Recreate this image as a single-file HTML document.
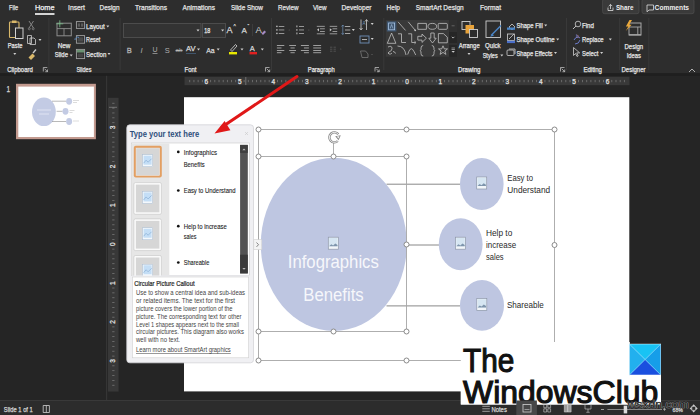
<!DOCTYPE html><html><head><meta charset="utf-8"><style>
html,body{margin:0;padding:0;width:700px;height:415px;overflow:hidden;background:#252525}
svg{display:block;font-family:"Liberation Sans",sans-serif}
</style></head><body>
<svg width="700" height="415" viewBox="0 0 700 415">
<rect x="0" y="0" width="700" height="73.3" fill="#2d2d2d"/>
<rect x="0" y="73.3" width="700" height="327" fill="#252525"/>
<rect x="0" y="73.3" width="700" height="2.5" fill="#1f1f1f"/>
<rect x="0" y="400" width="700" height="15" fill="#2c2c2c"/><rect x="0" y="400" width="700" height="0.9" fill="#3b3b3b"/>
<text x="9" y="10.2" font-size="7.5" fill="#e4e4e4" font-weight="normal" text-anchor="start" textLength="9" lengthAdjust="spacingAndGlyphs" stroke="#e4e4e4" stroke-width="0.25" >File</text>
<text x="35" y="10.2" font-size="7.5" fill="#f4f4f4" font-weight="normal" text-anchor="start" textLength="19.5" lengthAdjust="spacingAndGlyphs" stroke="#f4f4f4" stroke-width="0.25" >Home</text>
<text x="68" y="10.2" font-size="7.5" fill="#e4e4e4" font-weight="normal" text-anchor="start" textLength="17" lengthAdjust="spacingAndGlyphs" stroke="#e4e4e4" stroke-width="0.25" >Insert</text>
<text x="99.5" y="10.2" font-size="7.5" fill="#e4e4e4" font-weight="normal" text-anchor="start" textLength="20" lengthAdjust="spacingAndGlyphs" stroke="#e4e4e4" stroke-width="0.25" >Design</text>
<text x="135" y="10.2" font-size="7.5" fill="#e4e4e4" font-weight="normal" text-anchor="start" textLength="32" lengthAdjust="spacingAndGlyphs" stroke="#e4e4e4" stroke-width="0.25" >Transitions</text>
<text x="182.5" y="10.2" font-size="7.5" fill="#e4e4e4" font-weight="normal" text-anchor="start" textLength="32.5" lengthAdjust="spacingAndGlyphs" stroke="#e4e4e4" stroke-width="0.25" >Animations</text>
<text x="231" y="10.2" font-size="7.5" fill="#e4e4e4" font-weight="normal" text-anchor="start" textLength="32" lengthAdjust="spacingAndGlyphs" stroke="#e4e4e4" stroke-width="0.25" >Slide Show</text>
<text x="278" y="10.2" font-size="7.5" fill="#e4e4e4" font-weight="normal" text-anchor="start" textLength="20.5" lengthAdjust="spacingAndGlyphs" stroke="#e4e4e4" stroke-width="0.25" >Review</text>
<text x="313" y="10.2" font-size="7.5" fill="#e4e4e4" font-weight="normal" text-anchor="start" textLength="13.5" lengthAdjust="spacingAndGlyphs" stroke="#e4e4e4" stroke-width="0.25" >View</text>
<text x="341.5" y="10.2" font-size="7.5" fill="#e4e4e4" font-weight="normal" text-anchor="start" textLength="30" lengthAdjust="spacingAndGlyphs" stroke="#e4e4e4" stroke-width="0.25" >Developer</text>
<text x="386.5" y="10.2" font-size="7.5" fill="#e4e4e4" font-weight="normal" text-anchor="start" textLength="13.5" lengthAdjust="spacingAndGlyphs" stroke="#e4e4e4" stroke-width="0.25" >Help</text>
<text x="415.7" y="10.2" font-size="7.5" fill="#e4e4e4" font-weight="normal" text-anchor="start" textLength="48" lengthAdjust="spacingAndGlyphs" stroke="#e4e4e4" stroke-width="0.25" >SmartArt Design</text>
<text x="480" y="10.2" font-size="7.5" fill="#e4e4e4" font-weight="normal" text-anchor="start" textLength="21" lengthAdjust="spacingAndGlyphs" stroke="#e4e4e4" stroke-width="0.25" >Format</text>
<rect x="35" y="13.2" width="19.5" height="1.6" fill="#ffffff"/>
<rect x="602.6" y="-1" width="36.4" height="14.7" rx="2" fill="#3a3a3a" stroke="#4c4c4c" stroke-width="0.8"/>
<rect x="642" y="-1" width="52" height="14.7" rx="2" fill="#3a3a3a" stroke="#4c4c4c" stroke-width="0.8"/>
<path d="M608 7.5 v3 h5 v-3 M610.5 9 v-4.5 M608.7 6.2 l1.8 -1.8 l1.8 1.8" fill="none" stroke="#dddddd" stroke-width="0.8"/>
<text x="615.9" y="10.3" font-size="7.5" fill="#eeeeee" font-weight="bold" text-anchor="start" textLength="17.5" lengthAdjust="spacingAndGlyphs" >Share</text>
<path d="M647 5 h6.5 v5 h-4.5 l-2 1.8 z" fill="none" stroke="#ddd" stroke-width="0.8"/>
<text x="654.6" y="10.3" font-size="7.5" fill="#eeeeee" font-weight="bold" text-anchor="start" textLength="34.5" lengthAdjust="spacingAndGlyphs" >Comments</text>
<text x="7.2" y="71.6" font-size="7" fill="#e6e6e6" font-weight="normal" text-anchor="start" textLength="25.6" lengthAdjust="spacingAndGlyphs" stroke="#e6e6e6" stroke-width="0.25" >Clipboard</text>
<text x="76.4" y="71.6" font-size="7" fill="#e6e6e6" font-weight="normal" text-anchor="start" textLength="15" lengthAdjust="spacingAndGlyphs" stroke="#e6e6e6" stroke-width="0.25" >Slides</text>
<text x="184.5" y="71.6" font-size="7" fill="#e6e6e6" font-weight="normal" text-anchor="start" textLength="12" lengthAdjust="spacingAndGlyphs" stroke="#e6e6e6" stroke-width="0.25" >Font</text>
<text x="307.8" y="71.6" font-size="7" fill="#e6e6e6" font-weight="normal" text-anchor="start" textLength="27" lengthAdjust="spacingAndGlyphs" stroke="#e6e6e6" stroke-width="0.25" >Paragraph</text>
<text x="458" y="71.6" font-size="7" fill="#e6e6e6" font-weight="normal" text-anchor="start" textLength="22.5" lengthAdjust="spacingAndGlyphs" stroke="#e6e6e6" stroke-width="0.25" >Drawing</text>
<text x="583.4" y="71.6" font-size="7" fill="#e6e6e6" font-weight="normal" text-anchor="start" textLength="18.6" lengthAdjust="spacingAndGlyphs" stroke="#e6e6e6" stroke-width="0.25" >Editing</text>
<text x="621.5" y="71.6" font-size="7" fill="#e6e6e6" font-weight="normal" text-anchor="start" textLength="24" lengthAdjust="spacingAndGlyphs" stroke="#e6e6e6" stroke-width="0.25" >Designer</text>
<rect x="48.5" y="18" width="0.8" height="52" fill="#3c3c3c"/>
<rect x="119.7" y="18" width="0.8" height="52" fill="#3c3c3c"/>
<rect x="271.2" y="18" width="0.8" height="52" fill="#3c3c3c"/>
<rect x="383.4" y="18" width="0.8" height="52" fill="#3c3c3c"/>
<rect x="566.2" y="18" width="0.8" height="52" fill="#3c3c3c"/>
<rect x="619.3" y="18" width="0.8" height="52" fill="#3c3c3c"/>
<rect x="648.4" y="18" width="0.8" height="52" fill="#3c3c3c"/>
<path d="M43.3 67.5 h4 M43.3 67.5 v4 M44.5 68.7 l3 3 M47.5 69.5 v2.2 h-2.2" stroke="#cfcfcf" stroke-width="0.7" fill="none"/>
<path d="M265.5 67.5 h4 M265.5 67.5 v4 M266.7 68.7 l3 3 M269.7 69.5 v2.2 h-2.2" stroke="#cfcfcf" stroke-width="0.7" fill="none"/>
<path d="M375 67.5 h4 M375 67.5 v4 M376.2 68.7 l3 3 M379.2 69.5 v2.2 h-2.2" stroke="#cfcfcf" stroke-width="0.7" fill="none"/>
<path d="M560.5 67.5 h4 M560.5 67.5 v4 M561.7 68.7 l3 3 M564.7 69.5 v2.2 h-2.2" stroke="#cfcfcf" stroke-width="0.7" fill="none"/>
<path d="M689 72 l3 -3 l3 3" stroke="#cfcfcf" stroke-width="0.8" fill="none"/>
<rect x="9.5" y="22" width="9.5" height="15.5" rx="0.8" fill="none" stroke="#d9b86a" stroke-width="1.1"/>
<rect x="12" y="20.5" width="4.5" height="2.5" fill="#d9b86a"/>
<rect x="15.5" y="28" width="7.5" height="10.5" fill="#2b2b2b" stroke="#d0d0d0" stroke-width="1"/>
<text x="7.8" y="47.6" font-size="7" fill="#e6e6e6" font-weight="normal" text-anchor="start" textLength="14.6" lengthAdjust="spacingAndGlyphs" stroke="#e6e6e6" stroke-width="0.25" >Paste</text>
<path d="M13.3 53.1 h3 l-1.5 1.8 z" fill="#d0d0d0"/>
<path d="M29 21 l4.5 7 M33.5 21 l-4.5 7" stroke="#8a8a8a" stroke-width="0.9" fill="none"/><circle cx="29.3" cy="28.8" r="1" fill="none" stroke="#8a8a8a" stroke-width="0.7"/><circle cx="33.2" cy="28.8" r="1" fill="none" stroke="#8a8a8a" stroke-width="0.7"/>
<path d="M27.5 35.5 h4 v8 h-4 z M30 38 h4 l1.5 1.5 v5 h-5.5 z" stroke="#cfcfcf" stroke-width="0.8" fill="#2b2b2b"/>
<path d="M38.5 39.1 h3 l-1.5 1.8 z" fill="#d0d0d0"/>
<path d="M28.5 57.5 l4 -4 l2.5 2.5 l-4 4 z" fill="#d9b86a"/><path d="M33 53 l3 -3.5" stroke="#d0d0d0" stroke-width="1.3"/>
<rect x="57" y="23.2" width="14.3" height="12.6" fill="none" stroke="#8e8e8e" stroke-width="1"/><path d="M57 28.6 h14.3 M64 28.6 v7.2" stroke="#8e8e8e" stroke-width="0.9"/>
<path d="M59.8 20.3 v7 M56.3 23.8 h7" stroke="#7cc08c" stroke-width="0.8"/>
<text x="57.7" y="47.6" font-size="7" fill="#e6e6e6" font-weight="normal" text-anchor="start" textLength="12.7" lengthAdjust="spacingAndGlyphs" stroke="#e6e6e6" stroke-width="0.25" >New</text>
<text x="54.7" y="57.4" font-size="7" fill="#e6e6e6" font-weight="normal" text-anchor="start" textLength="13.3" lengthAdjust="spacingAndGlyphs" stroke="#e6e6e6" stroke-width="0.25" >Slide</text>
<path d="M69.7 54.6 h3 l-1.5 1.8 z" fill="#d0d0d0"/>
<rect x="76.4" y="21.6" width="8.2" height="6.8" fill="none" stroke="#a0a0a0" stroke-width="0.9"/><rect x="77.8" y="23.4" width="2.2" height="3.3" fill="#5a5a5a"/><rect x="81" y="23.4" width="2.2" height="3.3" fill="#5a5a5a"/>
<text x="86" y="29.1" font-size="7" fill="#e6e6e6" font-weight="normal" text-anchor="start" textLength="18.8" lengthAdjust="spacingAndGlyphs" stroke="#e6e6e6" stroke-width="0.25" >Layout</text>
<path d="M106.3 25.6 h3 l-1.5 1.8 z" fill="#d0d0d0"/>
<rect x="76.4" y="35.6" width="8.2" height="7.6" fill="none" stroke="#a0a0a0" stroke-width="0.9"/><rect x="77.8" y="37.3" width="5.4" height="4.3" fill="#4a4a4a"/><path d="M75 40 a2.6 2.6 0 0 1 4 -2.5" stroke="#5a86b8" stroke-width="1" fill="none"/>
<text x="86" y="41.9" font-size="7" fill="#e6e6e6" font-weight="normal" text-anchor="start" textLength="14.3" lengthAdjust="spacingAndGlyphs" stroke="#e6e6e6" stroke-width="0.25" >Reset</text>
<rect x="76.4" y="49.4" width="8.2" height="9.2" fill="none" stroke="#a0a0a0" stroke-width="0.9"/><rect x="76.9" y="49.9" width="7.2" height="2.6" fill="#6a9272"/><rect x="77.8" y="53.5" width="5.4" height="3.8" fill="#444"/>
<text x="86" y="56.6" font-size="7" fill="#e6e6e6" font-weight="normal" text-anchor="start" textLength="20.3" lengthAdjust="spacingAndGlyphs" stroke="#e6e6e6" stroke-width="0.25" >Section</text>
<path d="M107.5 53.1 h3 l-1.5 1.8 z" fill="#d0d0d0"/>
<rect x="123.5" y="23.5" width="77.5" height="14" fill="#333333" stroke="#505050" stroke-width="0.9"/>
<path d="M196.5 29.6 h3 l-1.5 1.8 z" fill="#d0d0d0"/>
<rect x="202.5" y="23.5" width="23" height="14" fill="#333333" stroke="#505050" stroke-width="0.9"/>
<text x="204.3" y="32.8" font-size="7.5" fill="#e8e8e8" font-weight="normal" text-anchor="start" textLength="6" lengthAdjust="spacingAndGlyphs" stroke="#e8e8e8" stroke-width="0.25" >18</text>
<path d="M221.1 29.6 h3 l-1.5 1.8 z" fill="#d0d0d0"/>
<text x="226.5" y="33.1" font-size="9" fill="#d8d8d8" font-weight="normal" text-anchor="start" stroke="#d8d8d8" stroke-width="0.25" >A</text>
<text x="233.5" y="28.1" font-size="5" fill="#d8d8d8" font-weight="normal" text-anchor="start" stroke="#d8d8d8" stroke-width="0.25" >^</text>
<text x="241.5" y="33.1" font-size="8" fill="#d8d8d8" font-weight="normal" text-anchor="start" stroke="#d8d8d8" stroke-width="0.25" >A</text>
<text x="247.5" y="28.1" font-size="5" fill="#d8d8d8" font-weight="normal" text-anchor="start" stroke="#d8d8d8" stroke-width="0.25" >ˇ</text>
<rect x="252" y="24" width="0.7" height="12" fill="#444"/>
<text x="255.5" y="33.1" font-size="9.5" fill="#d0d0d0" font-weight="normal" text-anchor="start" >A</text>
<path d="M261.5 33.5 l3 -3 l1.5 1.5 l-3 3 z" fill="#a58bc4"/>
<text x="126.8" y="52.6" font-size="7.5" fill="#b0b0b0" font-weight="normal" text-anchor="start" stroke="#b0b0b0" stroke-width="0.3" >B</text>
<text x="140.5" y="52.6" font-size="7.5" fill="#b0b0b0" font-weight="normal" text-anchor="start" font-style="italic">I</text>
<text x="152.5" y="51.6" font-size="7" fill="#b0b0b0" font-weight="normal" text-anchor="start" >U</text>
<rect x="152.5" y="53" width="5" height="0.7" fill="#b0b0b0"/>
<text x="164.8" y="52.6" font-size="7.5" fill="#b0b0b0" font-weight="normal" text-anchor="start" >S</text>
<text x="175.5" y="52.1" font-size="6" fill="#a0a0a0" font-weight="normal" text-anchor="start" textLength="7" lengthAdjust="spacingAndGlyphs" >ab</text>
<rect x="175.5" y="50" width="7" height="0.7" fill="#d8d8d8"/>
<text x="186" y="51.1" font-size="7" fill="#d8d8d8" font-weight="normal" text-anchor="start" textLength="9.5" lengthAdjust="spacingAndGlyphs" stroke="#d8d8d8" stroke-width="0.25" >AV</text>
<path d="M186.5 53.5 h9" stroke="#5a86b8" stroke-width="0.9" stroke-dasharray="1 1"/>
<path d="M197.0 48.6 h3 l-1.5 1.8 z" fill="#d0d0d0"/>
<text x="206.2" y="52.6" font-size="7.5" fill="#d8d8d8" font-weight="normal" text-anchor="start" textLength="8.5" lengthAdjust="spacingAndGlyphs" stroke="#d8d8d8" stroke-width="0.25" >Aa</text>
<path d="M216.7 48.6 h3 l-1.5 1.8 z" fill="#d0d0d0"/>
<path d="M230.5 50 l5 -5.5 l1.5 1.5 l-5 5.5 z" fill="none" stroke="#d8d8d8" stroke-width="0.8"/>
<rect x="229" y="52" width="8" height="2.4" fill="#e8e800"/>
<path d="M240.5 48.6 h3 l-1.5 1.8 z" fill="#d0d0d0"/>
<text x="249.8" y="50.6" font-size="7.5" fill="#d8d8d8" font-weight="normal" text-anchor="start" stroke="#d8d8d8" stroke-width="0.25" >A</text>
<rect x="249.5" y="52" width="7.5" height="2.4" fill="#e02020"/>
<path d="M260.8 48.6 h3 l-1.5 1.8 z" fill="#d0d0d0"/>
<rect x="276.2" y="25.7" width="1.4" height="1.4" fill="#c4c4c4"/>
<rect x="278.8" y="26.1" width="5.5" height="0.7" fill="#c4c4c4"/>
<rect x="276.2" y="29.2" width="1.4" height="1.4" fill="#c4c4c4"/>
<rect x="278.8" y="29.6" width="5.5" height="0.7" fill="#c4c4c4"/>
<rect x="276.2" y="32.7" width="1.4" height="1.4" fill="#c4c4c4"/>
<rect x="278.8" y="33.1" width="5.5" height="0.7" fill="#c4c4c4"/>
<circle cx="289.2" cy="30" r="0.5" fill="#666"/>
<rect x="296.4" y="25.5" width="1" height="1.8" fill="#c4c4c4"/>
<rect x="299" y="26.1" width="5" height="0.7" fill="#c4c4c4"/>
<rect x="296.4" y="29.0" width="1" height="1.8" fill="#c4c4c4"/>
<rect x="299" y="29.6" width="5" height="0.7" fill="#c4c4c4"/>
<rect x="296.4" y="32.5" width="1" height="1.8" fill="#c4c4c4"/>
<rect x="299" y="33.1" width="5" height="0.7" fill="#c4c4c4"/>
<circle cx="308.9" cy="30" r="0.5" fill="#666"/>
<rect x="316.8" y="25.9" width="8" height="0.7" fill="#c4c4c4"/><rect x="320" y="28.5" width="4.8" height="0.7" fill="#c4c4c4"/><rect x="320" y="31" width="4.8" height="0.7" fill="#c4c4c4"/><rect x="316.8" y="33.5" width="8" height="0.7" fill="#c4c4c4"/>
<path d="M319 28.2 l-2 1.6 l2 1.6 z" fill="#c4c4c4"/>
<rect x="329.7" y="25.9" width="7.5" height="0.7" fill="#c4c4c4"/><rect x="332.5" y="28.5" width="4.7" height="0.7" fill="#c4c4c4"/><rect x="332.5" y="31" width="4.7" height="0.7" fill="#c4c4c4"/><rect x="329.7" y="33.5" width="7.5" height="0.7" fill="#c4c4c4"/>
<path d="M329.8 28.2 l2 1.6 l-2 1.6 z" fill="#c4c4c4"/>
<path d="M342.8 25 v9.5 M341.5 26.5 l1.3 -1.5 l1.3 1.5 M341.5 33 l1.3 1.5 l1.3 -1.5" stroke="#6f90b8" stroke-width="0.7" fill="none"/>
<rect x="345" y="26.0" width="5.3" height="0.8" fill="#c4c4c4"/>
<rect x="345" y="29.6" width="5.3" height="0.8" fill="#c4c4c4"/>
<rect x="345" y="33.2" width="5.3" height="0.8" fill="#c4c4c4"/>
<path d="M351.8 29.1 h3 l-1.5 1.8 z" fill="#d0d0d0"/>
<rect x="276.90" y="45.2" width="7.40" height="0.75" fill="#c4c4c4"/>
<rect x="276.90" y="47.6" width="4.59" height="0.75" fill="#c4c4c4"/>
<rect x="276.90" y="50.0" width="7.40" height="0.75" fill="#c4c4c4"/>
<rect x="276.90" y="52.4" width="4.59" height="0.75" fill="#c4c4c4"/>
<rect x="289.20" y="45.2" width="6.80" height="0.75" fill="#c4c4c4"/>
<rect x="290.49" y="47.6" width="4.22" height="0.75" fill="#c4c4c4"/>
<rect x="289.20" y="50.0" width="6.80" height="0.75" fill="#c4c4c4"/>
<rect x="290.49" y="52.4" width="4.22" height="0.75" fill="#c4c4c4"/>
<rect x="300.90" y="45.2" width="8.00" height="0.75" fill="#c4c4c4"/>
<rect x="303.94" y="47.6" width="4.96" height="0.75" fill="#c4c4c4"/>
<rect x="300.90" y="50.0" width="8.00" height="0.75" fill="#c4c4c4"/>
<rect x="303.94" y="52.4" width="4.96" height="0.75" fill="#c4c4c4"/>
<rect x="313.20" y="45.2" width="7.90" height="0.75" fill="#c4c4c4"/>
<rect x="313.20" y="47.6" width="7.90" height="0.75" fill="#c4c4c4"/>
<rect x="313.20" y="50.0" width="7.90" height="0.75" fill="#c4c4c4"/>
<rect x="313.20" y="52.4" width="7.90" height="0.75" fill="#c4c4c4"/>
<path d="M330 47.2 h2.4 M330 49.2 h2.4 M330 51.2 h2.4 M333.5 47.2 h2.4 M333.5 49.2 h2.4 M333.5 51.2 h2.4" stroke="#6a6a6a" stroke-width="0.6"/>
<circle cx="340.8" cy="49" r="0.5" fill="#666"/>
<path d="M361 19.5 v10 M359.5 28 l1.5 2 l1.5 -2 M366.5 30 v-10 M365 21.5 l1.5 -2 l1.5 2" stroke="#cfcfcf" stroke-width="0.8" fill="none"/>
<text x="362.5" y="24.6" font-size="4.5" fill="#6f90b8" font-weight="normal" text-anchor="start" >A</text>
<path d="M370.7 23.1 h3 l-1.5 1.8 z" fill="#d0d0d0"/>
<rect x="360" y="36" width="9" height="7" fill="none" stroke="#6f90b8" stroke-width="0.9"/><path d="M362 39.5 h5" stroke="#cfcfcf" stroke-width="0.8"/>
<path d="M370.7 38.1 h3 l-1.5 1.8 z" fill="#d0d0d0"/>
<path d="M360.5 51 h5 l2.5 3 v3.5 h-6 z" fill="none" stroke="#777" stroke-width="0.8"/>
<circle cx="372" cy="54.5" r="0.5" fill="#777"/>
<rect x="385.7" y="20" width="63.5" height="36.7" fill="#393939"/>
<rect x="449.2" y="20" width="7.8" height="36.7" fill="#303030"/><rect x="449.2" y="32" width="7.8" height="11" fill="#262626"/><rect x="449.2" y="45" width="7.8" height="11.7" fill="#262626"/>
<rect x="386.8" y="21.3" width="9.6" height="10.2" fill="#3f5670"/><rect x="388.6" y="23" width="6" height="6.8" fill="none" stroke="#a8c4e4" stroke-width="0.8"/><path d="M390.2 28.5 l1.4 -4 l1.4 4" stroke="#a8c4e4" stroke-width="0.6" fill="none"/>
<path d="M398 21.8 L405.5 30.4" fill="none" stroke="#c8c8c8" stroke-width="0.75"/>
<path d="M408.2 21.8 L415 30" fill="none" stroke="#c8c8c8" stroke-width="0.75"/>
<circle cx="415.2" cy="30.3" r="0.9" fill="#c8c8c8"/>
<path d="M417.8 23.4 h8.6 v5.9 h-8.6 z" fill="none" stroke="#c8c8c8" stroke-width="0.75"/>
<ellipse cx="432.3" cy="26.35" rx="4.3" ry="2.95" fill="none" stroke="#c8c8c8" stroke-width="0.75"/>
<path d="M439.2 23.4 h7.1 q1 0 1 1 v3.9 q0 1 -1 1 h-7.1 q-1 0 -1 -1 v-3.9 q0 -1 1 -1 z" fill="none" stroke="#c8c8c8" stroke-width="0.75"/>
<path d="M387.3 43.3 L391.6 33 L395.9 43.3 z" fill="none" stroke="#c8c8c8" stroke-width="0.75"/>
<path d="M398 33.8 h3.5 v8.7 h4.5" fill="none" stroke="#c8c8c8" stroke-width="0.75"/>
<path d="M408.2 33.8 h3.5 v8.7 h3.5" fill="none" stroke="#c8c8c8" stroke-width="0.75"/>
<path d="M414.5 41.2 l1.5 1.3 l-1.5 1.3" fill="none" stroke="#c8c8c8" stroke-width="0.75"/>
<path d="M417.8 36.3 h4.2 v-2.3 l4.4 4.2 l-4.4 4.2 v-2.3 h-4.2 z" fill="none" stroke="#c8c8c8" stroke-width="0.75"/>
<path d="M430.8 33 h3.4 v5.2 h2 l-3.7 4.8 l-3.7 -4.8 h2 z" fill="none" stroke="#c8c8c8" stroke-width="0.75"/>
<path d="M438.4 33.6 h5 l3.9 3.6 v5.6 h-8.9 z" fill="none" stroke="#c8c8c8" stroke-width="0.75"/>
<path d="M388 47 q4 -2 4 1.5 q0 2.5 -3 3.5 q-2 1 0 2 q2 0.5 3 -1 M393 51.5 q2 0 2.5 2" fill="none" stroke="#c8c8c8" stroke-width="0.75"/>
<path d="M397.5 46 q7 0 8.5 9" fill="none" stroke="#c8c8c8" stroke-width="0.75"/>
<path d="M407.7 54.5 q2.5 -8 5 -5 q1.5 2 3 5.5" fill="none" stroke="#c8c8c8" stroke-width="0.75"/>
<path d="M423.2 45.5 q-2.2 0 -2.2 2.5 v1.8 l-0.8 1 l0.8 1 v1.8 q0 2.4 2.2 2.4" fill="none" stroke="#c8c8c8" stroke-width="0.75"/>
<path d="M431.8 45.5 q2.2 0 2.2 2.5 v1.8 l0.8 1 l-0.8 1 v1.8 q0 2.4 -2.2 2.4" fill="none" stroke="#c8c8c8" stroke-width="0.75"/>
<path d="M443 45.8 l1.3 3.1 h3.2 l-2.6 2.1 l1 3.4 l-2.9 -2 l-2.9 2 l1 -3.4 l-2.6 -2.1 h3.2 z" fill="none" stroke="#c8c8c8" stroke-width="0.75"/>
<rect x="451.6" y="25.5" width="3" height="0.7" fill="#777"/>
<path d="M451.8 36.8 l1.3 1.3 l1.3 -1.3" stroke="#d0d0d0" stroke-width="0.8" fill="none"/>
<path d="M451.5 48 h3.4 M451.5 49.5 h3.4" stroke="#cfcfcf" stroke-width="0.6"/><path d="M451.5 51 h3.4 l-1.7 1.8 z" fill="#cfcfcf"/>
<rect x="462" y="21.5" width="8" height="8" fill="none" stroke="#cfcfcf" stroke-width="0.9"/>
<rect x="465.5" y="25" width="8.5" height="8.5" fill="#e8a33a"/>
<rect x="469.5" y="29.5" width="8" height="8" fill="#2b2b2b" stroke="#cfcfcf" stroke-width="0.9"/>
<text x="458.7" y="48.1" font-size="7" fill="#e6e6e6" font-weight="normal" text-anchor="start" textLength="21" lengthAdjust="spacingAndGlyphs" stroke="#e6e6e6" stroke-width="0.25" >Arrange</text>
<path d="M467.5 53.1 h3 l-1.5 1.8 z" fill="#d0d0d0"/>
<rect x="486" y="21" width="14.5" height="16.5" fill="none" stroke="#cfcfcf" stroke-width="0.9"/>
<path d="M491 35.5 l10 -10" stroke="#4a86c8" stroke-width="1.4"/><path d="M490 37 l2.5 -3 l1.5 1.5 z" fill="#4a86c8"/>
<text x="485" y="48.1" font-size="7" fill="#e6e6e6" font-weight="normal" text-anchor="start" textLength="15.7" lengthAdjust="spacingAndGlyphs" stroke="#e6e6e6" stroke-width="0.25" >Quick</text>
<text x="482.7" y="57.8" font-size="7" fill="#e6e6e6" font-weight="normal" text-anchor="start" textLength="15" lengthAdjust="spacingAndGlyphs" stroke="#e6e6e6" stroke-width="0.25" >Styles</text>
<path d="M500.3 54.6 h3 l-1.5 1.8 z" fill="#d0d0d0"/>
<path d="M509 27 l3 -3 l3 3 l-3 3 z" fill="none" stroke="#cfcfcf" stroke-width="0.8"/><rect x="507" y="27.5" width="8" height="2.3" fill="#4a86c8"/>
<text x="516.5" y="27.8" font-size="7" fill="#e6e6e6" font-weight="normal" text-anchor="start" textLength="26.2" lengthAdjust="spacingAndGlyphs" stroke="#e6e6e6" stroke-width="0.25" >Shape Fill</text>
<path d="M544.2 24.6 h3 l-1.5 1.8 z" fill="#d0d0d0"/>
<rect x="507.5" y="34" width="7" height="6.5" fill="none" stroke="#cfcfcf" stroke-width="0.8"/><path d="M509 39 l5 -5" stroke="#cfcfcf" stroke-width="0.8"/><rect x="507" y="40.8" width="8" height="2.3" fill="#4a6ec8"/>
<text x="516.5" y="42.1" font-size="7" fill="#e6e6e6" font-weight="normal" text-anchor="start" textLength="38.2" lengthAdjust="spacingAndGlyphs" stroke="#e6e6e6" stroke-width="0.25" >Shape Outline</text>
<path d="M556.2 38.6 h3 l-1.5 1.8 z" fill="#d0d0d0"/>
<rect x="507" y="50" width="7" height="5.5" rx="1" fill="none" stroke="#cfcfcf" stroke-width="0.8"/><path d="M509 49 h6 v5" fill="none" stroke="#cfcfcf" stroke-width="0.8"/>
<text x="516.5" y="55.6" font-size="7" fill="#e6e6e6" font-weight="normal" text-anchor="start" textLength="36" lengthAdjust="spacingAndGlyphs" stroke="#e6e6e6" stroke-width="0.25" >Shape Effects</text>
<path d="M554.0 52.1 h3 l-1.5 1.8 z" fill="#d0d0d0"/>
<circle cx="578" cy="24" r="2.8" fill="none" stroke="#cfcfcf" stroke-width="0.8"/><path d="M576 26 l-3 3" stroke="#cfcfcf" stroke-width="0.9"/>
<text x="582" y="27.8" font-size="7" fill="#e6e6e6" font-weight="normal" text-anchor="start" textLength="11.9" lengthAdjust="spacingAndGlyphs" stroke="#e6e6e6" stroke-width="0.25" >Find</text>
<path d="M574 40 q3 -5 6 -2 M575 44 q4 0 5 -4" stroke="#6a7ac8" stroke-width="1" fill="none"/><text x="576" y="38" font-size="5" fill="#a58bc4">b</text>
<text x="582" y="42.0" font-size="7" fill="#e6e6e6" font-weight="normal" text-anchor="start" textLength="21.6" lengthAdjust="spacingAndGlyphs" stroke="#e6e6e6" stroke-width="0.25" >Replace</text>
<path d="M608.8 38.6 h3 l-1.5 1.8 z" fill="#d0d0d0"/>
<path d="M573.5 47.5 v8 l2 -2 l1.5 3 l1.2 -0.6 l-1.5 -3 h3 z" fill="none" stroke="#cfcfcf" stroke-width="0.8"/>
<text x="582" y="55.6" font-size="7" fill="#e6e6e6" font-weight="normal" text-anchor="start" textLength="16.3" lengthAdjust="spacingAndGlyphs" stroke="#e6e6e6" stroke-width="0.25" >Select</text>
<path d="M600.1 52.1 h3 l-1.5 1.8 z" fill="#d0d0d0"/>
<rect x="629" y="23" width="12" height="12" fill="none" stroke="#a8a8a8" stroke-width="1"/><path d="M629 27 h12 M637.8 27 v8" stroke="#a8a8a8" stroke-width="0.9"/><rect x="629" y="34.2" width="12" height="1.2" fill="#a8a8a8"/>
<path d="M629.5 19.9 l-3.6 6.5 h2.4 l-2.5 4.6 l5.8 -6.2 h-2.4 l2.8 -4.9 z" fill="#eaa83a"/>
<text x="624.5" y="48.6" font-size="7" fill="#e6e6e6" font-weight="normal" text-anchor="start" textLength="18.7" lengthAdjust="spacingAndGlyphs" stroke="#e6e6e6" stroke-width="0.25" >Design</text>
<text x="626.7" y="57.6" font-size="7" fill="#e6e6e6" font-weight="normal" text-anchor="start" textLength="14.3" lengthAdjust="spacingAndGlyphs" stroke="#e6e6e6" stroke-width="0.25" >Ideas</text>
<rect x="106.2" y="75.8" width="0.9" height="324.7" fill="#3a3a3a"/>
<text x="6.5" y="92" font-size="8.5" fill="#d8d8d8" font-weight="normal" text-anchor="start" textLength="3.6" lengthAdjust="spacingAndGlyphs" stroke="#d8d8d8" stroke-width="0.25" >1</text>
<rect x="16" y="83.8" width="79.9" height="55.4" fill="#c39a8f"/>
<rect x="18.3" y="86.6" width="75.6" height="50.4" fill="#ffffff"/>
<ellipse cx="43.9" cy="111.8" rx="11.9" ry="14.3" fill="#c3cbe4"/>
<path d="M52 101.2 h14 M56.6 111.3 h6 M52 121.5 h14" stroke="#8a8a8a" stroke-width="0.6"/>
<ellipse cx="69.1" cy="101.3" rx="3" ry="3.4" fill="#c3cbe4"/><ellipse cx="65.5" cy="111.3" rx="3" ry="3.4" fill="#c3cbe4"/><ellipse cx="69.1" cy="121.5" rx="3" ry="3.4" fill="#c3cbe4"/>
<path d="M73 100.5 h6 M73 102.5 h4 M69.5 110.5 h5 M69.5 112.5 h3 M73 121 h6" stroke="#b8b8b8" stroke-width="0.5"/>
<path d="M37 110 h14 M39 114 h10" stroke="#e6eaf5" stroke-width="0.8"/>
<rect x="184.5" y="76.8" width="445" height="8.4" fill="#393939"/>
<rect x="108" y="97.8" width="10.6" height="293.8" fill="#383838"/>
<rect x="189.36" y="79.9" width="0.8" height="2.3" fill="#767676"/>
<rect x="193.53" y="79.9" width="0.8" height="2.3" fill="#767676"/>
<rect x="197.71" y="79.9" width="0.8" height="2.3" fill="#767676"/>
<rect x="201.89" y="79.9" width="0.8" height="2.3" fill="#767676"/>
<text x="206.42000000000002" y="83.9" font-size="6.5" fill="#e4e4e4" font-weight="normal" text-anchor="middle" stroke="#e4e4e4" stroke-width="0.25" >6</text>
<rect x="210.25" y="79.9" width="0.8" height="2.3" fill="#767676"/>
<rect x="214.43" y="79.9" width="0.8" height="2.3" fill="#767676"/>
<rect x="218.61" y="79.9" width="0.8" height="2.3" fill="#767676"/>
<rect x="222.78" y="79.9" width="0.8" height="2.3" fill="#767676"/>
<rect x="226.96" y="79.9" width="0.8" height="2.3" fill="#767676"/>
<rect x="231.14" y="79.9" width="0.8" height="2.3" fill="#767676"/>
<rect x="235.32" y="79.9" width="0.8" height="2.3" fill="#767676"/>
<text x="239.85" y="83.9" font-size="6.5" fill="#e4e4e4" font-weight="normal" text-anchor="middle" stroke="#e4e4e4" stroke-width="0.25" >5</text>
<rect x="243.68" y="79.9" width="0.8" height="2.3" fill="#767676"/>
<rect x="247.86" y="79.9" width="0.8" height="2.3" fill="#767676"/>
<rect x="252.04" y="79.9" width="0.8" height="2.3" fill="#767676"/>
<rect x="256.21" y="79.9" width="0.8" height="2.3" fill="#767676"/>
<rect x="260.39" y="79.9" width="0.8" height="2.3" fill="#767676"/>
<rect x="264.57" y="79.9" width="0.8" height="2.3" fill="#767676"/>
<rect x="268.75" y="79.9" width="0.8" height="2.3" fill="#767676"/>
<text x="273.28" y="83.9" font-size="6.5" fill="#e4e4e4" font-weight="normal" text-anchor="middle" stroke="#e4e4e4" stroke-width="0.25" >4</text>
<rect x="277.11" y="79.9" width="0.8" height="2.3" fill="#767676"/>
<rect x="281.29" y="79.9" width="0.8" height="2.3" fill="#767676"/>
<rect x="285.47" y="79.9" width="0.8" height="2.3" fill="#767676"/>
<rect x="289.64" y="79.9" width="0.8" height="2.3" fill="#767676"/>
<rect x="293.82" y="79.9" width="0.8" height="2.3" fill="#767676"/>
<rect x="298.00" y="79.9" width="0.8" height="2.3" fill="#767676"/>
<rect x="302.18" y="79.9" width="0.8" height="2.3" fill="#767676"/>
<text x="306.71000000000004" y="83.9" font-size="6.5" fill="#e4e4e4" font-weight="normal" text-anchor="middle" stroke="#e4e4e4" stroke-width="0.25" >3</text>
<rect x="310.54" y="79.9" width="0.8" height="2.3" fill="#767676"/>
<rect x="314.72" y="79.9" width="0.8" height="2.3" fill="#767676"/>
<rect x="318.90" y="79.9" width="0.8" height="2.3" fill="#767676"/>
<rect x="323.07" y="79.9" width="0.8" height="2.3" fill="#767676"/>
<rect x="327.25" y="79.9" width="0.8" height="2.3" fill="#767676"/>
<rect x="331.43" y="79.9" width="0.8" height="2.3" fill="#767676"/>
<rect x="335.61" y="79.9" width="0.8" height="2.3" fill="#767676"/>
<text x="340.14" y="83.9" font-size="6.5" fill="#e4e4e4" font-weight="normal" text-anchor="middle" stroke="#e4e4e4" stroke-width="0.25" >2</text>
<rect x="343.97" y="79.9" width="0.8" height="2.3" fill="#767676"/>
<rect x="348.15" y="79.9" width="0.8" height="2.3" fill="#767676"/>
<rect x="352.33" y="79.9" width="0.8" height="2.3" fill="#767676"/>
<rect x="356.50" y="79.9" width="0.8" height="2.3" fill="#767676"/>
<rect x="360.68" y="79.9" width="0.8" height="2.3" fill="#767676"/>
<rect x="364.86" y="79.9" width="0.8" height="2.3" fill="#767676"/>
<rect x="369.04" y="79.9" width="0.8" height="2.3" fill="#767676"/>
<text x="373.57" y="83.9" font-size="6.5" fill="#e4e4e4" font-weight="normal" text-anchor="middle" stroke="#e4e4e4" stroke-width="0.25" >1</text>
<rect x="377.40" y="79.9" width="0.8" height="2.3" fill="#767676"/>
<rect x="381.58" y="79.9" width="0.8" height="2.3" fill="#767676"/>
<rect x="385.76" y="79.9" width="0.8" height="2.3" fill="#767676"/>
<rect x="389.94" y="79.9" width="0.8" height="2.3" fill="#767676"/>
<rect x="394.11" y="79.9" width="0.8" height="2.3" fill="#767676"/>
<rect x="398.29" y="79.9" width="0.8" height="2.3" fill="#767676"/>
<rect x="402.47" y="79.9" width="0.8" height="2.3" fill="#767676"/>
<text x="407.0" y="83.9" font-size="6.5" fill="#e4e4e4" font-weight="normal" text-anchor="middle" stroke="#e4e4e4" stroke-width="0.25" >0</text>
<rect x="410.83" y="79.9" width="0.8" height="2.3" fill="#767676"/>
<rect x="415.01" y="79.9" width="0.8" height="2.3" fill="#767676"/>
<rect x="419.19" y="79.9" width="0.8" height="2.3" fill="#767676"/>
<rect x="423.36" y="79.9" width="0.8" height="2.3" fill="#767676"/>
<rect x="427.54" y="79.9" width="0.8" height="2.3" fill="#767676"/>
<rect x="431.72" y="79.9" width="0.8" height="2.3" fill="#767676"/>
<rect x="435.90" y="79.9" width="0.8" height="2.3" fill="#767676"/>
<text x="440.43" y="83.9" font-size="6.5" fill="#e4e4e4" font-weight="normal" text-anchor="middle" stroke="#e4e4e4" stroke-width="0.25" >1</text>
<rect x="444.26" y="79.9" width="0.8" height="2.3" fill="#767676"/>
<rect x="448.44" y="79.9" width="0.8" height="2.3" fill="#767676"/>
<rect x="452.62" y="79.9" width="0.8" height="2.3" fill="#767676"/>
<rect x="456.79" y="79.9" width="0.8" height="2.3" fill="#767676"/>
<rect x="460.97" y="79.9" width="0.8" height="2.3" fill="#767676"/>
<rect x="465.15" y="79.9" width="0.8" height="2.3" fill="#767676"/>
<rect x="469.33" y="79.9" width="0.8" height="2.3" fill="#767676"/>
<text x="473.86" y="83.9" font-size="6.5" fill="#e4e4e4" font-weight="normal" text-anchor="middle" stroke="#e4e4e4" stroke-width="0.25" >2</text>
<rect x="477.69" y="79.9" width="0.8" height="2.3" fill="#767676"/>
<rect x="481.87" y="79.9" width="0.8" height="2.3" fill="#767676"/>
<rect x="486.05" y="79.9" width="0.8" height="2.3" fill="#767676"/>
<rect x="490.22" y="79.9" width="0.8" height="2.3" fill="#767676"/>
<rect x="494.40" y="79.9" width="0.8" height="2.3" fill="#767676"/>
<rect x="498.58" y="79.9" width="0.8" height="2.3" fill="#767676"/>
<rect x="502.76" y="79.9" width="0.8" height="2.3" fill="#767676"/>
<text x="507.28999999999996" y="83.9" font-size="6.5" fill="#e4e4e4" font-weight="normal" text-anchor="middle" stroke="#e4e4e4" stroke-width="0.25" >3</text>
<rect x="511.12" y="79.9" width="0.8" height="2.3" fill="#767676"/>
<rect x="515.30" y="79.9" width="0.8" height="2.3" fill="#767676"/>
<rect x="519.48" y="79.9" width="0.8" height="2.3" fill="#767676"/>
<rect x="523.65" y="79.9" width="0.8" height="2.3" fill="#767676"/>
<rect x="527.83" y="79.9" width="0.8" height="2.3" fill="#767676"/>
<rect x="532.01" y="79.9" width="0.8" height="2.3" fill="#767676"/>
<rect x="536.19" y="79.9" width="0.8" height="2.3" fill="#767676"/>
<text x="540.72" y="83.9" font-size="6.5" fill="#e4e4e4" font-weight="normal" text-anchor="middle" stroke="#e4e4e4" stroke-width="0.25" >4</text>
<rect x="544.55" y="79.9" width="0.8" height="2.3" fill="#767676"/>
<rect x="548.73" y="79.9" width="0.8" height="2.3" fill="#767676"/>
<rect x="552.91" y="79.9" width="0.8" height="2.3" fill="#767676"/>
<rect x="557.08" y="79.9" width="0.8" height="2.3" fill="#767676"/>
<rect x="561.26" y="79.9" width="0.8" height="2.3" fill="#767676"/>
<rect x="565.44" y="79.9" width="0.8" height="2.3" fill="#767676"/>
<rect x="569.62" y="79.9" width="0.8" height="2.3" fill="#767676"/>
<text x="574.15" y="83.9" font-size="6.5" fill="#e4e4e4" font-weight="normal" text-anchor="middle" stroke="#e4e4e4" stroke-width="0.25" >5</text>
<rect x="577.98" y="79.9" width="0.8" height="2.3" fill="#767676"/>
<rect x="582.16" y="79.9" width="0.8" height="2.3" fill="#767676"/>
<rect x="586.34" y="79.9" width="0.8" height="2.3" fill="#767676"/>
<rect x="590.51" y="79.9" width="0.8" height="2.3" fill="#767676"/>
<rect x="594.69" y="79.9" width="0.8" height="2.3" fill="#767676"/>
<rect x="598.87" y="79.9" width="0.8" height="2.3" fill="#767676"/>
<rect x="603.05" y="79.9" width="0.8" height="2.3" fill="#767676"/>
<text x="607.5799999999999" y="83.9" font-size="6.5" fill="#e4e4e4" font-weight="normal" text-anchor="middle" stroke="#e4e4e4" stroke-width="0.25" >6</text>
<rect x="611.41" y="79.9" width="0.8" height="2.3" fill="#767676"/>
<rect x="615.59" y="79.9" width="0.8" height="2.3" fill="#767676"/>
<rect x="619.77" y="79.9" width="0.8" height="2.3" fill="#767676"/>
<rect x="623.94" y="79.9" width="0.8" height="2.3" fill="#767676"/>
<path d="M245.8 77.5 v7.3" stroke="#d8d8d8" stroke-width="0.7" stroke-dasharray="1 1"/>
<rect x="112.2" y="102.84" width="2.3" height="0.8" fill="#767676"/>
<rect x="112.2" y="107.70" width="2.3" height="0.8" fill="#767676"/>
<rect x="112.2" y="112.56" width="2.3" height="0.8" fill="#767676"/>
<rect x="112.2" y="117.42" width="2.3" height="0.8" fill="#767676"/>
<rect x="112.2" y="122.29" width="2.3" height="0.8" fill="#767676"/>
<text x="0" y="-0.4" font-size="6.5" fill="#e4e4e4" font-weight="normal" text-anchor="middle" stroke="#e4e4e4" stroke-width="0.25" transform="translate(115.60,127.50) rotate(-90)">3</text>
<rect x="112.2" y="132.01" width="2.3" height="0.8" fill="#767676"/>
<rect x="112.2" y="136.88" width="2.3" height="0.8" fill="#767676"/>
<rect x="112.2" y="141.74" width="2.3" height="0.8" fill="#767676"/>
<rect x="112.2" y="146.60" width="2.3" height="0.8" fill="#767676"/>
<rect x="112.2" y="151.46" width="2.3" height="0.8" fill="#767676"/>
<rect x="112.2" y="156.33" width="2.3" height="0.8" fill="#767676"/>
<rect x="112.2" y="161.19" width="2.3" height="0.8" fill="#767676"/>
<text x="0" y="-0.4" font-size="6.5" fill="#e4e4e4" font-weight="normal" text-anchor="middle" stroke="#e4e4e4" stroke-width="0.25" transform="translate(115.60,166.40) rotate(-90)">2</text>
<rect x="112.2" y="170.91" width="2.3" height="0.8" fill="#767676"/>
<rect x="112.2" y="175.78" width="2.3" height="0.8" fill="#767676"/>
<rect x="112.2" y="180.64" width="2.3" height="0.8" fill="#767676"/>
<rect x="112.2" y="185.50" width="2.3" height="0.8" fill="#767676"/>
<rect x="112.2" y="190.36" width="2.3" height="0.8" fill="#767676"/>
<rect x="112.2" y="195.22" width="2.3" height="0.8" fill="#767676"/>
<rect x="112.2" y="200.09" width="2.3" height="0.8" fill="#767676"/>
<text x="0" y="-0.4" font-size="6.5" fill="#e4e4e4" font-weight="normal" text-anchor="middle" stroke="#e4e4e4" stroke-width="0.25" transform="translate(115.60,205.30) rotate(-90)">1</text>
<rect x="112.2" y="209.81" width="2.3" height="0.8" fill="#767676"/>
<rect x="112.2" y="214.67" width="2.3" height="0.8" fill="#767676"/>
<rect x="112.2" y="219.54" width="2.3" height="0.8" fill="#767676"/>
<rect x="112.2" y="224.40" width="2.3" height="0.8" fill="#767676"/>
<rect x="112.2" y="229.26" width="2.3" height="0.8" fill="#767676"/>
<rect x="112.2" y="234.12" width="2.3" height="0.8" fill="#767676"/>
<rect x="112.2" y="238.99" width="2.3" height="0.8" fill="#767676"/>
<text x="0" y="-0.4" font-size="6.5" fill="#e4e4e4" font-weight="normal" text-anchor="middle" stroke="#e4e4e4" stroke-width="0.25" transform="translate(115.60,244.20) rotate(-90)">0</text>
<rect x="112.2" y="248.71" width="2.3" height="0.8" fill="#767676"/>
<rect x="112.2" y="253.57" width="2.3" height="0.8" fill="#767676"/>
<rect x="112.2" y="258.44" width="2.3" height="0.8" fill="#767676"/>
<rect x="112.2" y="263.30" width="2.3" height="0.8" fill="#767676"/>
<rect x="112.2" y="268.16" width="2.3" height="0.8" fill="#767676"/>
<rect x="112.2" y="273.02" width="2.3" height="0.8" fill="#767676"/>
<rect x="112.2" y="277.89" width="2.3" height="0.8" fill="#767676"/>
<text x="0" y="-0.4" font-size="6.5" fill="#e4e4e4" font-weight="normal" text-anchor="middle" stroke="#e4e4e4" stroke-width="0.25" transform="translate(115.60,283.10) rotate(-90)">1</text>
<rect x="112.2" y="287.61" width="2.3" height="0.8" fill="#767676"/>
<rect x="112.2" y="292.47" width="2.3" height="0.8" fill="#767676"/>
<rect x="112.2" y="297.34" width="2.3" height="0.8" fill="#767676"/>
<rect x="112.2" y="302.20" width="2.3" height="0.8" fill="#767676"/>
<rect x="112.2" y="307.06" width="2.3" height="0.8" fill="#767676"/>
<rect x="112.2" y="311.92" width="2.3" height="0.8" fill="#767676"/>
<rect x="112.2" y="316.79" width="2.3" height="0.8" fill="#767676"/>
<text x="0" y="-0.4" font-size="6.5" fill="#e4e4e4" font-weight="normal" text-anchor="middle" stroke="#e4e4e4" stroke-width="0.25" transform="translate(115.60,322.00) rotate(-90)">2</text>
<rect x="112.2" y="326.51" width="2.3" height="0.8" fill="#767676"/>
<rect x="112.2" y="331.37" width="2.3" height="0.8" fill="#767676"/>
<rect x="112.2" y="336.24" width="2.3" height="0.8" fill="#767676"/>
<rect x="112.2" y="341.10" width="2.3" height="0.8" fill="#767676"/>
<rect x="112.2" y="345.96" width="2.3" height="0.8" fill="#767676"/>
<rect x="112.2" y="350.82" width="2.3" height="0.8" fill="#767676"/>
<rect x="112.2" y="355.69" width="2.3" height="0.8" fill="#767676"/>
<text x="0" y="-0.4" font-size="6.5" fill="#e4e4e4" font-weight="normal" text-anchor="middle" stroke="#e4e4e4" stroke-width="0.25" transform="translate(115.60,360.90) rotate(-90)">3</text>
<rect x="112.2" y="365.41" width="2.3" height="0.8" fill="#767676"/>
<rect x="112.2" y="370.27" width="2.3" height="0.8" fill="#767676"/>
<rect x="112.2" y="375.14" width="2.3" height="0.8" fill="#767676"/>
<rect x="112.2" y="380.00" width="2.3" height="0.8" fill="#767676"/>
<rect x="112.2" y="384.86" width="2.3" height="0.8" fill="#767676"/>
<path d="M109.5 107.3 h7.5" stroke="#d8d8d8" stroke-width="0.7" stroke-dasharray="1 1"/>
<rect x="184" y="97.2" width="445.3" height="294.2" fill="#ffffff"/>
<path d="M386.5 184.2 H460 M407 245 H439 M386.5 305.9 H460" stroke="#7c7c7c" stroke-width="0.9"/>
<ellipse cx="333.8" cy="244.4" rx="73" ry="86.6" fill="#bec6e1"/>
<ellipse cx="481.8" cy="184" rx="21.8" ry="26" fill="#bec6e1"/>
<ellipse cx="460.7" cy="244.2" rx="21.9" ry="26" fill="#bec6e1"/>
<ellipse cx="482" cy="305.4" rx="22" ry="25.4" fill="#bec6e1"/>
<rect x="328.3" y="237.2" width="10" height="12" fill="#f2f6fa" stroke="#8c97a8" stroke-width="0.7"/><rect x="329.1" y="238.0" width="8.4" height="8.2" fill="#d6e6f2"/><path d="M329.1 246.2 l2.2 -2 l1.8 1.2 l2.2 -2 l2.2 1.5 v1.3 z" fill="#7e95ac"/>
<rect x="476.7" y="177" width="10" height="12" fill="#f2f6fa" stroke="#8c97a8" stroke-width="0.7"/><rect x="477.5" y="177.8" width="8.4" height="8.2" fill="#d6e6f2"/><path d="M477.5 186 l2.2 -2 l1.8 1.2 l2.2 -2 l2.2 1.5 v1.3 z" fill="#7e95ac"/>
<rect x="455.5" y="237.2" width="10" height="12" fill="#f2f6fa" stroke="#8c97a8" stroke-width="0.7"/><rect x="456.3" y="238.0" width="8.4" height="8.2" fill="#d6e6f2"/><path d="M456.3 246.2 l2.2 -2 l1.8 1.2 l2.2 -2 l2.2 1.5 v1.3 z" fill="#7e95ac"/>
<rect x="476.8" y="298.4" width="10" height="12" fill="#f2f6fa" stroke="#8c97a8" stroke-width="0.7"/><rect x="477.6" y="299.2" width="8.4" height="8.2" fill="#d6e6f2"/><path d="M477.6 307.4 l2.2 -2 l1.8 1.2 l2.2 -2 l2.2 1.5 v1.3 z" fill="#7e95ac"/>
<text x="287.8" y="268.0" font-size="19.2" fill="#f6f7fb" font-weight="normal" text-anchor="start" textLength="91" lengthAdjust="spacingAndGlyphs" >Infographics</text>
<text x="303.3" y="300.8" font-size="19.2" fill="#f6f7fb" font-weight="normal" text-anchor="start" textLength="60.4" lengthAdjust="spacingAndGlyphs" >Benefits</text>
<text x="507.3" y="180.9" font-size="9" fill="#2a2a2a" font-weight="normal" text-anchor="start" textLength="25.7" lengthAdjust="spacingAndGlyphs" >Easy to</text>
<text x="507.3" y="192.8" font-size="9" fill="#2a2a2a" font-weight="normal" text-anchor="start" textLength="42.8" lengthAdjust="spacingAndGlyphs" >Understand</text>
<text x="486" y="235.6" font-size="9" fill="#2a2a2a" font-weight="normal" text-anchor="start" textLength="26.3" lengthAdjust="spacingAndGlyphs" >Help to</text>
<text x="486" y="247.7" font-size="9" fill="#2a2a2a" font-weight="normal" text-anchor="start" textLength="30.2" lengthAdjust="spacingAndGlyphs" >increase</text>
<text x="486" y="259.5" font-size="9" fill="#2a2a2a" font-weight="normal" text-anchor="start" textLength="17.6" lengthAdjust="spacingAndGlyphs" >sales</text>
<text x="506.9" y="308.4" font-size="9" fill="#2a2a2a" font-weight="normal" text-anchor="start" textLength="36.8" lengthAdjust="spacingAndGlyphs" >Shareable</text>
<rect x="258.5" y="129.5" width="296" height="231" fill="none" stroke="#a6a6a6" stroke-width="0.9"/>
<rect x="258.5" y="156.5" width="148" height="175" fill="none" stroke="#a6a6a6" stroke-width="0.9"/>
<path d="M333.5 156.5 v-13.5" stroke="#a6a6a6" stroke-width="0.9"/>
<path d="M338.3 134.3 A5 5 0 1 0 337.8 141" fill="none" stroke="#8a8a8a" stroke-width="2.4"/><path d="M338.3 134.3 A5 5 0 1 0 337.8 141" fill="none" stroke="#ffffff" stroke-width="0.8"/><path d="M335.2 136.2 L340.8 135.2 L338.6 140.2 z" fill="#8a8a8a"/><path d="M336.8 136.6 L339.4 136.2 L338.4 138.4 z" fill="#fff"/>
<circle cx="258.5" cy="129.5" r="2.5" fill="#ffffff" stroke="#8a8a8a" stroke-width="1"/>
<circle cx="406.5" cy="129.5" r="2.5" fill="#ffffff" stroke="#8a8a8a" stroke-width="1"/>
<circle cx="554.5" cy="129.5" r="2.5" fill="#ffffff" stroke="#8a8a8a" stroke-width="1"/>
<circle cx="258.5" cy="245" r="2.5" fill="#ffffff" stroke="#8a8a8a" stroke-width="1"/>
<circle cx="554.5" cy="245" r="2.5" fill="#ffffff" stroke="#8a8a8a" stroke-width="1"/>
<circle cx="258.5" cy="360.5" r="2.5" fill="#ffffff" stroke="#8a8a8a" stroke-width="1"/>
<circle cx="406.5" cy="360.5" r="2.5" fill="#ffffff" stroke="#8a8a8a" stroke-width="1"/>
<circle cx="554.5" cy="360.5" r="2.5" fill="#ffffff" stroke="#8a8a8a" stroke-width="1"/>
<circle cx="258.5" cy="156.5" r="2.5" fill="#ffffff" stroke="#8a8a8a" stroke-width="1"/>
<circle cx="333.5" cy="156.5" r="2.5" fill="#ffffff" stroke="#8a8a8a" stroke-width="1"/>
<circle cx="406.5" cy="156.5" r="2.5" fill="#ffffff" stroke="#8a8a8a" stroke-width="1"/>
<circle cx="406.5" cy="244.5" r="2.5" fill="#ffffff" stroke="#8a8a8a" stroke-width="1"/>
<circle cx="258.5" cy="331.5" r="2.5" fill="#ffffff" stroke="#8a8a8a" stroke-width="1"/>
<circle cx="333.5" cy="331.5" r="2.5" fill="#ffffff" stroke="#8a8a8a" stroke-width="1"/>
<circle cx="406.5" cy="331.5" r="2.5" fill="#ffffff" stroke="#8a8a8a" stroke-width="1"/>
<rect x="126.8" y="124.8" width="126.7" height="238" rx="3" fill="#f0f0f3" stroke="#d4d4d8" stroke-width="0.8"/>
<text x="129.8" y="136.8" font-size="9" fill="#2e4f7c" font-weight="bold" text-anchor="start" textLength="69.5" lengthAdjust="spacingAndGlyphs" >Type your text here</text>
<path d="M245 132 l3 3 M248 132 l-3 3" stroke="#c8c8c8" stroke-width="0.6"/>
<rect x="131.4" y="143" width="118" height="132.5" fill="#ffffff" stroke="#c9c9c9" stroke-width="0.6"/>
<rect x="131.8" y="143.4" width="37.5" height="131.8" fill="#e6e6e6"/>
<rect x="133.8" y="145.8" width="28" height="31.799999999999983" rx="2" fill="#e39f62"/>
<rect x="136.1" y="148.10000000000002" width="23.4" height="27.19999999999998" fill="#d6d6d6"/>
<rect x="136.1" y="148.10000000000002" width="23.4" height="27.19999999999998" fill="none" stroke="#ececec" stroke-width="0.6"/>
<rect x="142.6" y="154.7" width="10" height="12" fill="#f4f8fc" stroke="#a9bdd4" stroke-width="0.5"/><rect x="143.6" y="155.7" width="8" height="9" fill="#c4def6"/><path d="M143.6 163.2 l2.5 -3 l2 2 l3.5 -3.5" stroke="#8fb4d8" stroke-width="0.8" fill="none"/>
<rect x="133.9" y="182.6" width="27.5" height="31.700000000000017" rx="1.5" fill="#fafafa" stroke="#bdbdbd" stroke-width="0.5"/>
<rect x="135.9" y="184.6" width="23.5" height="27.700000000000017" fill="#d6d6d6"/>
<rect x="142.6" y="191.45" width="10" height="12" fill="#f4f8fc" stroke="#a9bdd4" stroke-width="0.5"/><rect x="143.6" y="192.45" width="8" height="9" fill="#c4def6"/><path d="M143.6 199.95 l2.5 -3 l2 2 l3.5 -3.5" stroke="#8fb4d8" stroke-width="0.8" fill="none"/>
<rect x="133.9" y="218.9" width="27.5" height="31.69999999999999" rx="1.5" fill="#fafafa" stroke="#bdbdbd" stroke-width="0.5"/>
<rect x="135.9" y="220.9" width="23.5" height="27.69999999999999" fill="#d6d6d6"/>
<rect x="142.6" y="227.75" width="10" height="12" fill="#f4f8fc" stroke="#a9bdd4" stroke-width="0.5"/><rect x="143.6" y="228.75" width="8" height="9" fill="#c4def6"/><path d="M143.6 236.25 l2.5 -3 l2 2 l3.5 -3.5" stroke="#8fb4d8" stroke-width="0.8" fill="none"/>
<rect x="133.9" y="255.5" width="27.5" height="31.5" rx="1.5" fill="#fafafa" stroke="#bdbdbd" stroke-width="0.5"/>
<rect x="135.9" y="257.5" width="23.5" height="27.5" fill="#d6d6d6"/>
<rect x="142.6" y="264.25" width="10" height="12" fill="#f4f8fc" stroke="#a9bdd4" stroke-width="0.5"/><rect x="143.6" y="265.25" width="8" height="9" fill="#c4def6"/><path d="M143.6 272.75 l2.5 -3 l2 2 l3.5 -3.5" stroke="#8fb4d8" stroke-width="0.8" fill="none"/>
<rect x="131.8" y="275.5" width="118" height="2" fill="#f0f0f3"/>
<rect x="240.1" y="144.9" width="7.7" height="128.5" fill="#535353"/>
<rect x="240.1" y="144.9" width="7.7" height="8" fill="#3e3e3e"/><rect x="240.1" y="254.7" width="7.7" height="18.7" fill="#3a3a3a"/>
<path d="M242.3 150.2 l1.7 -1.8 l1.7 1.8 z" fill="#b8b8b8"/><path d="M242.3 268 l1.7 1.8 l1.7 -1.8 z" fill="#b8b8b8"/>
<text x="183.7" y="154.7" font-size="7.2" fill="#1a1a1a" font-weight="normal" text-anchor="start" textLength="33.3" lengthAdjust="spacingAndGlyphs" stroke="#1a1a1a" stroke-width="0.1" >Infographics</text>
<text x="183.7" y="166.8" font-size="7.2" fill="#1a1a1a" font-weight="normal" text-anchor="start" textLength="21" lengthAdjust="spacingAndGlyphs" stroke="#1a1a1a" stroke-width="0.1" >Benefits</text>
<text x="183.7" y="193.1" font-size="7.2" fill="#1a1a1a" font-weight="normal" text-anchor="start" textLength="51.9" lengthAdjust="spacingAndGlyphs" stroke="#1a1a1a" stroke-width="0.1" >Easy to Understand</text>
<text x="183.7" y="229" font-size="7.2" fill="#1a1a1a" font-weight="normal" text-anchor="start" textLength="43.1" lengthAdjust="spacingAndGlyphs" stroke="#1a1a1a" stroke-width="0.1" >Help to increase</text>
<text x="183.7" y="238.5" font-size="7.2" fill="#1a1a1a" font-weight="normal" text-anchor="start" textLength="12.7" lengthAdjust="spacingAndGlyphs" stroke="#1a1a1a" stroke-width="0.1" >sales</text>
<text x="183.7" y="265" font-size="7.2" fill="#1a1a1a" font-weight="normal" text-anchor="start" textLength="25.7" lengthAdjust="spacingAndGlyphs" stroke="#1a1a1a" stroke-width="0.1" >Shareable</text>
<circle cx="178.3" cy="151.9" r="1.35" fill="#111"/>
<circle cx="178.3" cy="190.5" r="1.35" fill="#111"/>
<circle cx="178.3" cy="226.2" r="1.35" fill="#111"/>
<circle cx="178.3" cy="262.5" r="1.35" fill="#111"/>
<rect x="132.3" y="277" width="116.4" height="80.8" fill="#ffffff" stroke="#cfcfcf" stroke-width="0.6"/>
<text x="134.2" y="285.6" font-size="7" fill="#2a2a2a" font-weight="normal" text-anchor="start" textLength="60.4" lengthAdjust="spacingAndGlyphs" stroke="#2a2a2a" stroke-width="0.22" >Circular Picture Callout</text>
<text x="136" y="295.3" font-size="6.9" fill="#444444" font-weight="normal" text-anchor="start" textLength="109" lengthAdjust="spacingAndGlyphs" >Use to show a central idea and sub-ideas</text>
<text x="136" y="303.1" font-size="6.9" fill="#444444" font-weight="normal" text-anchor="start" textLength="99" lengthAdjust="spacingAndGlyphs" >or related items. The text for the first</text>
<text x="136" y="310.90000000000003" font-size="6.9" fill="#444444" font-weight="normal" text-anchor="start" textLength="96.5" lengthAdjust="spacingAndGlyphs" >picture covers the lower portion of the</text>
<text x="136" y="318.7" font-size="6.9" fill="#444444" font-weight="normal" text-anchor="start" textLength="105.5" lengthAdjust="spacingAndGlyphs" >picture. The corresponding text for other</text>
<text x="136" y="326.5" font-size="6.9" fill="#444444" font-weight="normal" text-anchor="start" textLength="103" lengthAdjust="spacingAndGlyphs" >Level 1 shapes appears next to the small</text>
<text x="136" y="334.3" font-size="6.9" fill="#444444" font-weight="normal" text-anchor="start" textLength="108" lengthAdjust="spacingAndGlyphs" >circular pictures. This diagram also works</text>
<text x="136" y="342.1" font-size="6.9" fill="#444444" font-weight="normal" text-anchor="start" textLength="44" lengthAdjust="spacingAndGlyphs" >well with no text.</text>
<text x="136" y="352" font-size="6.9" fill="#444444" font-weight="normal" text-anchor="start" textLength="94.8" lengthAdjust="spacingAndGlyphs" >Learn more about SmartArt graphics</text>
<rect x="136" y="353.2" width="94.8" height="0.6" fill="#555"/>
<rect x="253.8" y="239.7" width="8" height="10" fill="#f4f4f4" stroke="#d0d0d0" stroke-width="0.6"/><path d="M256.5 242.5 l2 2.2 l-2 2.2" stroke="#555" stroke-width="0.7" fill="none"/>
<path d="M297 76.5 L222 127" stroke="#e01818" stroke-width="3" stroke-linecap="round"/>
<path d="M214.5 133.6 L224.6 121 L230.4 130.2 z" fill="#e01818"/>
<rect x="460.8" y="342" width="169" height="62.5" fill="#ffffff"/>
<rect x="460.8" y="374.5" width="200.2" height="30" fill="#ffffff"/>
<text x="463" y="371.8" font-size="32.5" fill="#111111" font-weight="normal" text-anchor="start" textLength="51.3" lengthAdjust="spacingAndGlyphs" stroke="#111111" stroke-width="1.1" >The</text>
<text x="463" y="403.2" font-size="30.5" fill="#111111" font-weight="normal" text-anchor="start" textLength="195.3" lengthAdjust="spacingAndGlyphs" stroke="#111111" stroke-width="1.1" >WindowsClub</text>
<rect x="629.1" y="343.8" width="31.9" height="31.2" fill="#ffffff"/>
<path d="M629.6 344.2 H660.6 L645.1 359.6 z" fill="#18c3f4"/>
<path d="M629.6 344.2 V374.8 L645.1 359.6 z" fill="#22b0ee"/>
<path d="M660.6 344.2 V374.8 L645.1 359.6 z" fill="#169ee9"/>
<path d="M629.6 374.8 H660.6 L645.1 359.6 z" fill="#1a4fdf"/>
<path d="M629.6 344.2 L660.6 374.8 M660.6 344.2 L629.6 374.8" stroke="#74d6fb" stroke-width="0.7"/>
<text x="3.8" y="412.3" font-size="7" fill="#d8d8d8" font-weight="normal" text-anchor="start" textLength="29" lengthAdjust="spacingAndGlyphs" stroke="#d8d8d8" stroke-width="0.25" >Slide 1 of 1</text>
<path d="M43.2 405.5 h6.2 v7 h-6.2 z M46.3 405.5 v7" stroke="#d0d0d0" stroke-width="0.8" fill="none"/>
<path d="M482.3 406.3 h7.5 M482.3 408.8 h7.5 M482.3 411.3 h7.5" stroke="#cfcfcf" stroke-width="0.7"/><path d="M484.5 405 l1.5 -1.5 l1.5 1.5" stroke="#cfcfcf" stroke-width="0.6" fill="none"/>
<text x="491.4" y="412.2" font-size="7" fill="#d8d8d8" font-weight="normal" text-anchor="start" textLength="15.5" lengthAdjust="spacingAndGlyphs" stroke="#d8d8d8" stroke-width="0.25" >Notes</text>
<rect x="516.3" y="400.5" width="20.6" height="14.5" fill="#474747"/>
<rect x="523" y="404.5" width="8" height="7.5" fill="none" stroke="#d0d0d0" stroke-width="0.8"/><path d="M524.5 409.5 h5" stroke="#d0d0d0" stroke-width="0.6"/>
<path d="M543.8 404.5 h2.8 v3.2 h-2.8 z M547.8 404.5 h2.8 v3.2 h-2.8 z M543.8 408.8 h2.8 v3.2 h-2.8 z M547.8 408.8 h2.8 v3.2 h-2.8 z" fill="none" stroke="#cfcfcf" stroke-width="0.6"/>
<path d="M564.3 404.5 h3.4 v7.5 h-3.4 z M567.7 404.5 h3.4 v7.5 h-3.4 z" fill="#9a9a9a" stroke="#cfcfcf" stroke-width="0.6"/>
<path d="M585 404.5 h6 v4.5 h-6 z M588 409 v3 M586.3 412.3 h3.4" fill="none" stroke="#cfcfcf" stroke-width="0.6"/>
<rect x="601" y="409" width="3" height="0.7" fill="#cfcfcf"/><rect x="607.4" y="409" width="54.6" height="0.8" fill="#a0a0a0"/><rect x="623.7" y="405.7" width="3.5" height="7.7" fill="#dcdcdc"/><path d="M663 409.3 h3 M664.5 407.8 v3" stroke="#cfcfcf" stroke-width="0.6"/>
<text x="627.4" y="408.2" font-size="10" fill="#1c1c1c" stroke="#9a9a9a" stroke-width="0.7" paint-order="stroke" textLength="61.2" lengthAdjust="spacingAndGlyphs">wsxdn.com</text>
<text x="672.6" y="412.2" font-size="5.5" fill="#d0d0d0" font-weight="normal" text-anchor="start" textLength="10.3" lengthAdjust="spacingAndGlyphs" stroke="#d0d0d0" stroke-width="0.25" >68%</text>
<path d="M693.7 404.2 l1.8 2 h-3.6 z M693.7 412.6 l1.8 -2 h-3.6 z M689.7 408.4 l2 -1.8 v3.6 z M697.7 408.4 l-2 -1.8 v3.6 z" fill="#cfcfcf"/><rect x="691.9" y="406.6" width="3.6" height="3.6" fill="none" stroke="#cfcfcf" stroke-width="0.6"/>
</svg></body></html>
